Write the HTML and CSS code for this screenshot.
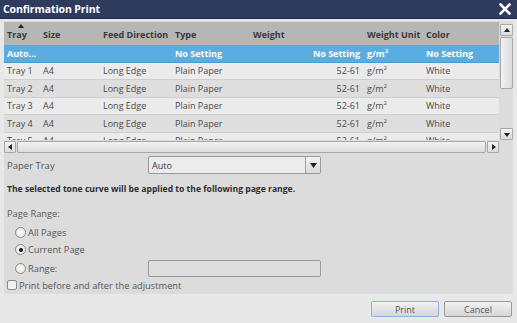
FILE: index.html
```html
<!DOCTYPE html>
<html>
<head>
<meta charset="utf-8">
<link rel="stylesheet" href="styles.css">
</head>
<body>
<div class="dialog">
  <div class="titlebar">
    <span class="title">Confirmation Print</span>
    <svg class="close" width="12" height="12" viewBox="0 0 12 12"><path d="M1.5 1.5 L10.5 10.5 M10.5 1.5 L1.5 10.5" stroke="#fff" stroke-width="2.6" stroke-linecap="square"/></svg>
  </div>
  <div class="panel">
    <div class="tablewrap">
      <div class="table">
        <div class="viewport">
          <div class="row head">
            <span class="sort"></span>
            <div class="c">Tray</div>
            <div class="c">Size</div>
            <div class="c">Feed Direction</div>
            <div class="c">Type</div>
            <div class="c">Weight</div>
            <div class="c">Weight Unit</div>
            <div class="c">Color</div>
          </div>
          <div class="row sel">
            <div class="c">Auto...</div>
            <div class="c"></div>
            <div class="c"></div>
            <div class="c">No Setting</div>
            <div class="c r">No Setting</div>
            <div class="c">g/m<sup>2</sup></div>
            <div class="c">No Setting</div>
          </div>
          <div class="row odd">
            <div class="c">Tray 1</div><div class="c">A4</div><div class="c">Long Edge</div><div class="c">Plain Paper</div><div class="c r">52-61</div><div class="c">g/m<sup>2</sup></div><div class="c">White</div>
          </div>
          <div class="row even">
            <div class="c">Tray 2</div><div class="c">A4</div><div class="c">Long Edge</div><div class="c">Plain Paper</div><div class="c r">52-61</div><div class="c">g/m<sup>2</sup></div><div class="c">White</div>
          </div>
          <div class="row odd">
            <div class="c">Tray 3</div><div class="c">A4</div><div class="c">Long Edge</div><div class="c">Plain Paper</div><div class="c r">52-61</div><div class="c">g/m<sup>2</sup></div><div class="c">White</div>
          </div>
          <div class="row even">
            <div class="c">Tray 4</div><div class="c">A4</div><div class="c">Long Edge</div><div class="c">Plain Paper</div><div class="c r">52-61</div><div class="c">g/m<sup>2</sup></div><div class="c">White</div>
          </div>
          <div class="row odd">
            <div class="c">Tray 5</div><div class="c">A4</div><div class="c">Long Edge</div><div class="c">Plain Paper</div><div class="c r">52-61</div><div class="c">g/m<sup>2</sup></div><div class="c">White</div>
          </div>
        </div>
        <div class="hscroll">
          <div class="sbtn"><svg width="5" height="6" viewBox="0 0 5 6"><path d="M4 0 L4 6 L0 3 Z" fill="#222"/></svg></div>
          <div class="hthumb"></div>
          <div class="sbtn"><svg width="5" height="6" viewBox="0 0 5 6"><path d="M1 0 L1 6 L5 3 Z" fill="#222"/></svg></div>
        </div>
      </div>
      <div class="vscroll">
        <div class="sbtn"><svg width="6" height="5" viewBox="0 0 6 5"><path d="M0 4 L6 4 L3 0 Z" fill="#222"/></svg></div>
        <div class="vthumb"></div>
        <div class="vspace"></div>
        <div class="sbtn"><svg width="6" height="5" viewBox="0 0 6 5"><path d="M0 1 L6 1 L3 5 Z" fill="#222"/></svg></div>
      </div>
    </div>

    <div class="form">
      <div class="field">
        <span class="label">Paper Tray</span>
        <div class="select">
          <span class="val">Auto</span>
          <span class="arrow"><svg width="7" height="5" viewBox="0 0 7 5"><path d="M0 0 L7 0 L3.5 5 Z" fill="#222"/></svg></span>
        </div>
      </div>
      <p class="note">The selected tone curve will be applied to the following page range.</p>
      <p class="plabel">Page Range:</p>
      <div class="radios">
        <label class="radio"><span class="dot"></span>All Pages</label>
        <label class="radio on"><span class="dot"></span>Current Page</label>
        <div class="field rangefield">
          <label class="radio"><span class="dot"></span>Range:</label>
          <div class="input"></div>
        </div>
      </div>
      <label class="check"><span class="box"></span>Print before and after the adjustment</label>
    </div>
  </div>
  <div class="buttons">
    <button class="btn primary">Print</button>
    <button class="btn">Cancel</button>
  </div>
</div>
</body>
</html>
```

FILE: styles.css
```css
* { box-sizing: border-box; }
html, body { margin: 0; padding: 0; }
body {
  width: 517px;
  height: 323px;
  overflow: hidden;
  background: #e8e8e8;
  font-family: "Open Sans", "Noto Sans", sans-serif;
  font-size: 9px;
  color: #4a4a4a;
}
.dialog { display: flex; flex-direction: column; height: 323px; }
.titlebar {
  height: 19px;
  background: #2e3b5c;
  border-bottom: 1px solid #1f2a45;
  display: flex;
  align-items: center;
  justify-content: space-between;
  padding: 0 6px 0 3px;
}
.title { color: #fff; font-weight: 700; font-size: 10.5px; letter-spacing: -0.1px; }
.close { display: block; }

.panel {
  margin: 2px 4px 0 4px;
  height: 273px;
  background: #dcdcdc;
  display: flex;
  flex-direction: column;
}
.tablewrap { display: flex; gap: 1px; height: 131px; margin-top: 1px; }
.table { width: 495px; display: flex; flex-direction: column; }
.viewport { height: 118px; overflow: hidden; background: #e8e8e8; }
.row {
  display: grid;
  grid-template-columns: 36px 60px 72px 78px 114px 59px 76px;
  height: 17.5px;
  align-items: center;
  border-bottom: 1px solid #cfcfcf;
}
.row .c { padding-left: 3px; white-space: nowrap; overflow: visible; }
.row .c.r { text-align: right; padding-right: 4px; padding-left: 0; }
.row.head {
  position: relative;
  height: 23px;
  background: #b6b6b6;
  font-weight: 700;
  color: #3a3a3a;
  align-items: end;
  padding-bottom: 4px;
  border-bottom: none;
}
.sort {
  position: absolute;
  left: 14px;
  top: 2px;
  width: 0; height: 0;
  border-left: 3.5px solid transparent;
  border-right: 3.5px solid transparent;
  border-bottom: 4px solid #222;
}
.row.sel { background: #5aade0; color: #fff; font-weight: 700; border-bottom: 1px solid #4a9ad0; }
.row.odd { background: #ebebeb; }
.row.even { background: #dedede; }
sup { font-size: 6px; line-height: 0; vertical-align: 4px; }

.hscroll {
  margin-top: 1px;
  height: 12px;
  display: flex;
  gap: 1px;
}
.sbtn {
  width: 12px; height: 12px;
  background: linear-gradient(#f4f4f4, #dadada);
  border: 1px solid #a8a8a8;
  border-radius: 1px;
  display: flex; align-items: center; justify-content: center;
  flex: none;
}
.sbtn svg { display: block; }
.hthumb {
  flex: 1;
  background: linear-gradient(#f2f2f2, #dcdcdc);
  border: 1px solid #a8a8a8;
  border-radius: 2px;
}
.vscroll {
  width: 13px;
  height: 118px;
  display: flex;
  flex-direction: column;
  gap: 1px;
  padding-top: 2px;
}
.vscroll .sbtn { width: 13px; }
.vthumb {
  height: 52px;
  background: linear-gradient(90deg, #f2f2f2, #dcdcdc);
  border: 1px solid #a8a8a8;
  border-radius: 2px;
}
.vspace { flex: 1; }

.form { padding: 3px 0 0 3px; display: flex; flex-direction: column; }
.field { display: flex; align-items: center; }
.label { width: 141px; font-size: 9.5px; color: #555; }
.select {
  width: 173px; height: 18px;
  background: #ececec;
  border: 1px solid #9a9a9a;
  border-radius: 2px;
  display: flex; align-items: center; justify-content: space-between;
  color: #333;
}
.select .val { padding-left: 3px; }
.select .arrow {
  width: 15px; height: 16px;
  border-left: 1px solid #a0a0a0;
  background: linear-gradient(#f2f2f2, #dadada);
  display: flex; align-items: center; justify-content: center;
}
.select .arrow svg { display: block; }
.note { margin: 9px 0 0; font-weight: 700; color: #2e2e2e; font-size: 8.6px; }
.plabel { margin: 12px 0 0; font-size: 9.3px; color: #5a5a5a; }
.radios { display: flex; flex-direction: column; padding-left: 8px; margin-top: 5px; gap: 3.5px; }
.radio { display: flex; align-items: center; height: 14px; font-size: 9.3px; color: #555; }
.dot {
  width: 11px; height: 11px;
  border: 1px solid #8a8a8a;
  border-radius: 50%;
  background: radial-gradient(circle, #fafafa, #e2e2e2);
  margin-right: 2px;
  display: flex; align-items: center; justify-content: center;
}
.radio.on .dot::after {
  content: "";
  width: 4px; height: 4px;
  border-radius: 50%;
  background: #111;
}
.rangefield .radio { width: 133px; }
.input {
  width: 173px; height: 17px;
  border: 1px solid #9a9a9a;
  border-radius: 2px;
  background: #dedede;
}
.check { display: flex; align-items: center; margin-top: 1px; font-size: 9.3px; color: #555; height: 14px; }
.box {
  width: 10px; height: 10px;
  border: 1px solid #8a8a8a;
  border-radius: 2px;
  background: #f2f2f2;
  margin-right: 2px;
}

.buttons {
  display: flex;
  justify-content: flex-end;
  gap: 5px;
  padding: 7px 5px 0 0;
}
.btn {
  width: 68px; height: 16px;
  font-family: "Open Sans", "Noto Sans", sans-serif;
  font-size: 9px;
  color: #555;
  background: linear-gradient(#f2f2f2, #d6d6d6);
  border: 1px solid #9a9a9a;
  border-radius: 2px;
  padding: 0;
}
.btn.primary { border-color: #8eb0e6; }
```
